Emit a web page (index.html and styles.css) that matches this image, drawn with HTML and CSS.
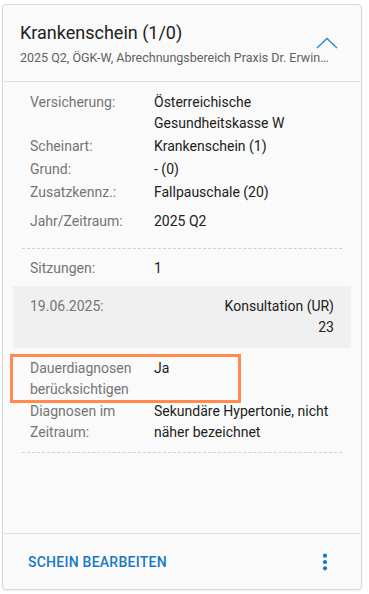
FILE: index.html
```html
<!DOCTYPE html>
<html lang="de">
<head>
    <meta charset="UTF-8">
    <meta name="viewport" content="width=device-width, initial-scale=1.0">
    <title>Krankenschein</title>
    <link rel="stylesheet" href="styles.css">
</head>
<body>
    <div class="card">
        <div class="card-header">
            <div class="title-row">
                <div class="card-title">Krankenschein (1/0)</div>
                <svg class="chevron" width="22" height="12" viewBox="0 0 22 12">
                    <polyline points="1,11 11,1.5 21,11" fill="none" stroke="#2a87d0" stroke-width="1.3"/>
                </svg>
            </div>
            <div class="card-subtitle">2025 Q2, ÖGK-W, Abrechnungsbereich Praxis Dr. Erwin Mustermann</div>
        </div>

        <div class="card-content">
            <div class="row">
                <div class="label">Versicherung:</div>
                <div class="value">Österreichische Gesundheitskasse W</div>
            </div>
            <div class="row">
                <div class="label">Scheinart:</div>
                <div class="value">Krankenschein (1)</div>
            </div>
            <div class="row">
                <div class="label">Grund:</div>
                <div class="value">- (0)</div>
            </div>
            <div class="row">
                <div class="label">Zusatzkennz.:</div>
                <div class="value">Fallpauschale (20)</div>
            </div>
            <div class="row row-period">
                <div class="label">Jahr/Zeitraum:</div>
                <div class="value">2025 Q2</div>
            </div>

            <div class="divider divider-period"></div>

            <div class="row row-sessions">
                <div class="label">Sitzungen:</div>
                <div class="value">1</div>
            </div>

            <div class="session">
                <div class="label">19.06.2025:</div>
                <div class="session-value">Konsultation (UR)<br>23</div>
            </div>

            <div class="row row-highlight">
                <div class="label">Dauerdiagnosen berücksichtigen</div>
                <div class="value">Ja</div>
            </div>
            <div class="row">
                <div class="label">Diagnosen im Zeitraum:</div>
                <div class="value">Sekundäre Hypertonie, nicht näher bezeichnet</div>
            </div>

            <div class="divider divider-diag"></div>
        </div>

        <div class="card-footer">
            <a href="#" class="footer-btn">SCHEIN BEARBEITEN</a>
            <svg class="more" width="6" height="18" viewBox="0 0 6 18">
                <circle cx="3" cy="2.7" r="2.1" fill="#1779c4"/>
                <circle cx="3" cy="9" r="2.1" fill="#1779c4"/>
                <circle cx="3" cy="15.3" r="2.1" fill="#1779c4"/>
            </svg>
        </div>
    </div>
</body>
</html>
```

FILE: styles.css
```css
* {
    margin: 0;
    padding: 0;
    box-sizing: border-box;
}

body {
    font-family: Roboto, 'Liberation Sans', sans-serif;
    background: #fff;
    padding: 4px 7px 4px 2px;
    color: #212121;
}

.card {
    height: 586px;
    display: flex;
    flex-direction: column;
    background: #fafafa;
    border: 1px solid #d9d9d9;
    border-radius: 4px;
    box-shadow: 0 1px 2px rgba(0, 0, 0, 0.08);
}

.card-header {
    padding: 16px 23px 14px 17px;
    border-bottom: 1px solid #e0e0e0;
}

.title-row {
    display: flex;
    justify-content: space-between;
    align-items: flex-start;
    height: 24px;
}

.card-title {
    font-size: 18px;
    line-height: 24px;
    color: #212121;
}

.chevron {
    flex-shrink: 0;
    margin-top: 16px;
}

.card-subtitle {
    margin-top: 4px;
    padding-right: 8px;
    font-size: 12.5px;
    line-height: 18px;
    color: #616161;
    white-space: nowrap;
    overflow: hidden;
    text-overflow: ellipsis;
}

.card-content {
    flex: 1;
    padding: 9px 10px 0;
}

.row {
    display: flex;
    padding: 1px 17px;
    font-size: 14px;
    line-height: 21px;
}

.label {
    width: 124px;
    flex-shrink: 0;
    padding-right: 8px;
    color: #757575;
}

.value {
    flex: 1;
    color: #212121;
}

.row-period {
    margin-top: 6px;
}

.divider {
    margin: 0 9px;
    border-top: 1px dashed #d0d0d0;
}

.divider-period {
    margin-top: 15px;
}

.row-sessions {
    margin-top: 8px;
}

.session {
    display: flex;
    justify-content: space-between;
    margin-top: 6px;
    padding: 10px 17px;
    background: #f0f0f0;
    font-size: 14px;
    line-height: 21px;
}

.session-value {
    text-align: right;
}

.row-highlight {
    width: 225px;
    margin-top: 9px;
    padding: 1px 17px 0;
    outline: 3px solid #ff8a4c;
}

.divider-diag {
    margin-top: 8px;
}

.card-footer {
    height: 56px;
    display: flex;
    align-items: center;
    justify-content: space-between;
    padding: 0 33px 0 25px;
    border-top: 1px solid #e0e0e0;
}

.footer-btn {
    font-size: 14px;
    font-weight: 500;
    letter-spacing: 0.25px;
    color: #1779c4;
    text-decoration: none;
}
```
